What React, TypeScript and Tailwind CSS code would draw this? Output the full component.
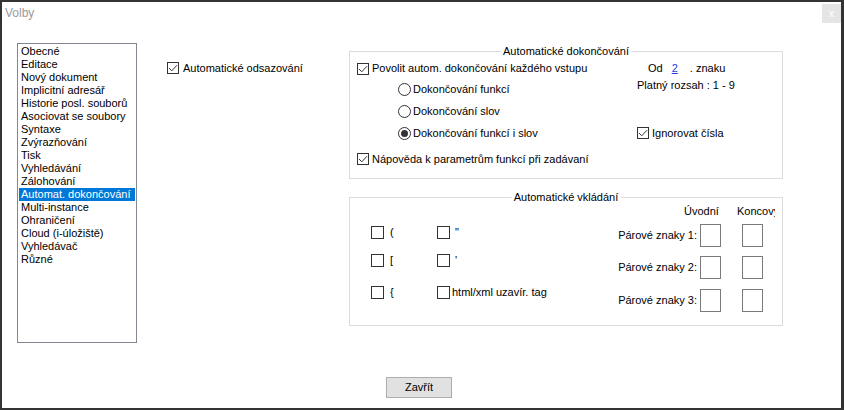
import React from "react";

const Check = ({ checked = false, big = false }: { checked?: boolean; big?: boolean }) => (
  <span
    className={
      big
        ? "inline-flex shrink-0 items-center justify-center w-[13px] h-[13px] border border-[#333] bg-white"
        : "inline-flex shrink-0 items-center justify-center w-[12px] h-[12px] border border-[#333] bg-white"
    }
  >
    {checked && (
      <svg width="10" height="10" viewBox="0 0 10 10">
        <path d="M1 5 L3.8 7.8 L9 2.2" fill="none" stroke="#333" strokeWidth="1" />
      </svg>
    )}
  </span>
);

const Radio = ({ selected = false }: { selected?: boolean }) => (
  <span className="inline-flex shrink-0 items-center justify-center w-[13px] h-[13px] rounded-full border border-[#333] bg-white">
    {selected && <span className="w-[7px] h-[7px] rounded-full bg-[#333]" />}
  </span>
);

const items = [
  "Obecné",
  "Editace",
  "Nový dokument",
  "Implicitní adresář",
  "Historie posl. souborů",
  "Asociovat se soubory",
  "Syntaxe",
  "Zvýrazňování",
  "Tisk",
  "Vyhledávání",
  "Zálohování",
  "Automat. dokončování",
  "Multi-instance",
  "Ohraničení",
  "Cloud (i-úložiště)",
  "Vyhledávač",
  "Různé",
];

const Box = () => <div className="w-[21px] h-[23px] border border-[#7a7a7a] bg-white" />;

export default function App() {
  return (
    <div className="w-[844px] h-[410px] bg-white border-t-2 border-l-2 border-b-2 border-r-[3px] border-[#333] flex flex-col font-['Liberation_Sans',Arial,sans-serif] text-[11px] leading-[13px] text-black overflow-hidden">
      {/* title bar */}
      <div className="h-[24px] flex items-start justify-between">
        <div className="pl-[3px] pt-[4px] text-[12px] leading-[14px] text-[#9a9a9a]">Volby</div>
        <div className="mt-[2px] w-[19px] h-[19px] bg-[#e5e5e5] text-white text-[10px] flex items-center justify-center">x</div>
      </div>

      {/* content */}
      <div className="flex pt-[17px]">
        <div className="ml-[15px] w-[120px] h-[300px] border border-[#828790] p-[1px]">
          {items.map((t) => (
            <div
              key={t}
              className={
                t === "Automat. dokončování"
                  ? "h-[13px] leading-[13px] px-[2px] bg-[#0078d7] text-white whitespace-nowrap"
                  : "h-[13px] leading-[13px] px-[2px] whitespace-nowrap"
              }
            >
              {t}
            </div>
          ))}
        </div>

        <div className="ml-[30px] w-[182px]">
          <div className="mt-[18px] h-[14px] flex items-center">
            <Check checked />
            <span className="ml-[4px]">Automatické odsazování</span>
          </div>
        </div>

        <div className="w-[434px] flex flex-col">
          {/* group 1 */}
          <div className="relative mt-[8px] h-[128px] border border-[#dcdcdc] flex">
            <span className="absolute left-1/2 -translate-x-1/2 top-[-7px] bg-white px-[2px] leading-[13px] whitespace-nowrap">
              Automatické dokončování
            </span>
            <div className="ml-[7px] w-[280px] pt-[7px] flex flex-col">
              <div className="h-[19px] flex items-center">
                <Check checked />
                <span className="ml-[3px] whitespace-nowrap">Povolit autom. dokončování každého vstupu</span>
              </div>
              <div className="h-[22px] flex items-center pl-[41px]">
                <Radio />
                <span className="ml-[2px]">Dokončování funkcí</span>
              </div>
              <div className="h-[22px] flex items-center pl-[41px]">
                <Radio />
                <span className="ml-[2px]">Dokončování slov</span>
              </div>
              <div className="h-[22px] flex items-center pl-[41px]">
                <Radio selected />
                <span className="ml-[2px]">Dokončování funkcí i slov</span>
              </div>
              <div className="mt-[4px] h-[22px] flex items-center">
                <Check checked />
                <span className="ml-[3px] whitespace-nowrap">Nápověda k parametrům funkcí při zadávaní</span>
              </div>
            </div>
            <div className="pt-[7px] flex flex-col">
              <div className="h-[19px] flex items-center pl-[11px]">
                <span>Od</span>
                <span className="ml-[9px] text-[#1a3fe0] underline">2</span>
                <span className="ml-[12px]">. znaku</span>
              </div>
              <div className="h-[15px] flex items-center">Platný rozsah : 1 - 9</div>
              <div className="mt-[29px] h-[22px] flex items-center">
                <Check checked />
                <span className="ml-[3px]">Ignorovat čísla</span>
              </div>
            </div>
          </div>

          {/* group 2 */}
          <div className="relative mt-[18px] h-[129px] border border-[#dcdcdc] flex">
            <span className="absolute left-1/2 -translate-x-1/2 top-[-7px] bg-white px-[2px] leading-[13px] whitespace-nowrap">
              Automatické vkládání
            </span>
            <div className="w-[250px] pl-[21px] flex flex-col">
              <div className="mt-[24px] h-[20px] flex items-center">
                <div className="w-[66px] flex items-center">
                  <Check big />
                  <span className="ml-[6px]">(</span>
                </div>
                <div className="flex items-center">
                  <Check big />
                  <span className="ml-[5px]">"</span>
                </div>
              </div>
              <div className="mt-[8px] h-[20px] flex items-center">
                <div className="w-[66px] flex items-center">
                  <Check big />
                  <span className="ml-[6px]">[</span>
                </div>
                <div className="flex items-center">
                  <Check big />
                  <span className="ml-[5px]">'</span>
                </div>
              </div>
              <div className="mt-[12px] h-[20px] flex items-center">
                <div className="w-[66px] flex items-center">
                  <Check big />
                  <span className="ml-[6px]">{"{"}</span>
                </div>
                <div className="flex items-center">
                  <Check big />
                  <span className="ml-[2px] whitespace-nowrap">html/xml uzavír. tag</span>
                </div>
              </div>
            </div>
            <div className="w-[175px] overflow-hidden flex flex-col">
              <div className="mt-[5px] h-[16px] flex items-center pl-[84px] whitespace-nowrap">
                <span className="w-[53px] shrink-0">Úvodní</span>
                <span className="shrink-0">Koncový</span>
              </div>
              <div className="mt-[5px] flex items-center">
                <span className="w-[97px] text-right whitespace-nowrap">Párové znaky 1:</span>
                <div className="ml-[3px]"><Box /></div>
                <div className="ml-[21px]"><Box /></div>
              </div>
              <div className="mt-[9px] flex items-center">
                <span className="w-[97px] text-right whitespace-nowrap">Párové znaky 2:</span>
                <div className="ml-[3px]"><Box /></div>
                <div className="ml-[21px]"><Box /></div>
              </div>
              <div className="mt-[10px] flex items-center">
                <span className="w-[97px] text-right whitespace-nowrap">Párové znaky 3:</span>
                <div className="ml-[3px]"><Box /></div>
                <div className="ml-[21px]"><Box /></div>
              </div>
            </div>
          </div>
        </div>
      </div>

      <div className="mt-[34px] ml-[384px] w-[66px] h-[21px] border border-[#adadad] bg-[#e1e1e1] flex items-center justify-center">
        Zavřít
      </div>
    </div>
  );
}
